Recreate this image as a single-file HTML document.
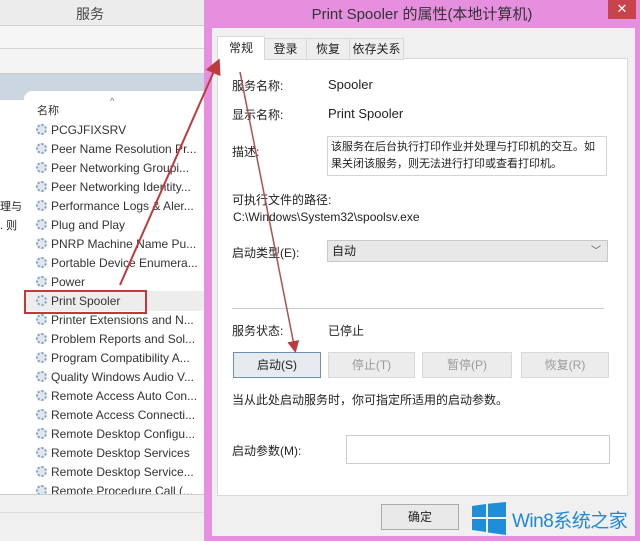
<!DOCTYPE html>
<html><head><meta charset="utf-8"><style>
html,body{margin:0;width:640px;height:541px;overflow:hidden}
body{position:relative;background:#f0f0f0;font-family:"Liberation Sans","Noto Sans CJK SC",sans-serif;font-size:12px;color:#222}
.a{position:absolute;white-space:nowrap}
.row{position:absolute;left:36px;height:19px;line-height:19px;font-size:12px;color:#333;white-space:nowrap}
.row i{display:inline-block;width:11px;height:11px;border-radius:50%;border:2px dotted #8aa0b4;box-sizing:border-box;margin-right:4px;vertical-align:-1px;background:#dfe8f0}
.btn{position:absolute;height:24px;line-height:24px;text-align:center;border:1px solid #d8d8d8;background:#ececec;color:#9a9a9a;font-size:12px}
</style></head><body>
<div class="a" style="left:0;top:0;width:205px;height:25px;background:#ececec;border-bottom:1px solid #d0d0d0"></div>
<div class="a" style="left:76px;top:4px;font-size:14px;color:#444">服务</div>
<div class="a" style="left:0;top:26px;width:205px;height:22px;background:#f6f6f6;border-bottom:1px solid #d4d4d4"></div>
<div class="a" style="left:0;top:49px;width:205px;height:24px;background:#f4f4f4;border-bottom:1px solid #ccc"></div>
<div class="a" style="left:0;top:74px;width:205px;height:26px;background:#ccd6e0"></div>
<div class="a" style="left:0;top:100px;width:205px;height:395px;background:#fff"></div>
<div class="a" style="left:24px;top:91px;width:181px;height:404px;background:#fff;border-radius:8px 0 0 0"></div>
<div class="a" style="left:0;top:198px;font-size:11px">理与</div>
<div class="a" style="left:0;top:217px;font-size:11px">. 则</div>
<div class="a" style="left:37px;top:102px;font-size:11px;color:#333">名称</div>
<div class="a" style="left:110px;top:96px;font-size:9px;color:#777">^</div>
<div class="row" style="top:121px"><i></i>PCGJFIXSRV</div>
<div class="row" style="top:140px"><i></i>Peer Name Resolution Pr...</div>
<div class="row" style="top:159px"><i></i>Peer Networking Groupi...</div>
<div class="row" style="top:178px"><i></i>Peer Networking Identity...</div>
<div class="row" style="top:197px"><i></i>Performance Logs &amp; Aler...</div>
<div class="row" style="top:216px"><i></i>Plug and Play</div>
<div class="row" style="top:235px"><i></i>PNRP Machine Name Pu...</div>
<div class="row" style="top:254px"><i></i>Portable Device Enumera...</div>
<div class="row" style="top:273px"><i></i>Power</div>
<div class="a" style="left:24px;top:291px;width:181px;height:20px;background:#ededed"></div>
<div class="row" style="top:292px"><i></i>Print Spooler</div>
<div class="a" style="left:24px;top:290px;width:119px;height:20px;border:2px solid #c0393b"></div>
<div class="row" style="top:311px"><i></i>Printer Extensions and N...</div>
<div class="row" style="top:330px"><i></i>Problem Reports and Sol...</div>
<div class="row" style="top:349px"><i></i>Program Compatibility A...</div>
<div class="row" style="top:368px"><i></i>Quality Windows Audio V...</div>
<div class="row" style="top:387px"><i></i>Remote Access Auto Con...</div>
<div class="row" style="top:406px"><i></i>Remote Access Connecti...</div>
<div class="row" style="top:425px"><i></i>Remote Desktop Configu...</div>
<div class="row" style="top:444px"><i></i>Remote Desktop Services</div>
<div class="row" style="top:463px"><i></i>Remote Desktop Service...</div>
<div class="row" style="top:482px;height:12px;overflow:hidden"><i></i>Remote Procedure Call (...</div>
<div class="a" style="left:0;top:494px;width:205px;height:47px;background:#f0f0f0;border-top:1px solid #ccc"></div>
<div class="a" style="left:0;top:512px;width:205px;height:1px;background:#ddd"></div>
<div class="a" style="left:204px;top:0;width:436px;height:541px;background:#e68fdf"></div>
<div class="a" style="left:204px;top:3px;width:436px;text-align:center;font-size:15px;color:#333">Print Spooler 的属性(本地计算机)</div>
<div class="a" style="left:608px;top:0;width:28px;height:19px;background:#c9434a;color:#fff;text-align:center;line-height:18px;font-size:13px">✕</div>
<div class="a" style="left:212px;top:28px;width:423px;height:508px;background:#f0f0f0"></div>
<div class="a" style="left:217px;top:58px;width:409px;height:436px;background:#fff;border:1px solid #d9d9d9"></div>
<div class="a" style="left:217px;top:36px;width:46px;height:23px;background:#fff;border:1px solid #d9d9d9;border-bottom:none;line-height:22px;text-align:center">常规</div>
<div class="a" style="left:264px;top:38px;width:41px;height:20px;background:#eee;border:1px solid #d9d9d9;line-height:20px;text-align:center">登录</div>
<div class="a" style="left:306px;top:38px;width:42px;height:20px;background:#eee;border:1px solid #d9d9d9;line-height:20px;text-align:center">恢复</div>
<div class="a" style="left:349px;top:38px;width:53px;height:20px;background:#eee;border:1px solid #d9d9d9;line-height:20px;text-align:center">依存关系</div>
<div class="a" style="left:232px;top:77px">服务名称:</div>
<div class="a" style="left:328px;top:77px;font-size:13px">Spooler</div>
<div class="a" style="left:232px;top:106px">显示名称:</div>
<div class="a" style="left:328px;top:106px;font-size:13px">Print Spooler</div>
<div class="a" style="left:232px;top:143px">描述:</div>
<div class="a" style="left:327px;top:136px;width:280px;height:40px;border:1px solid #d4d4d4;padding:2px 3px;box-sizing:border-box;line-height:17px;font-size:11px;white-space:normal">该服务在后台执行打印作业并处理与打印机的交互。如<br>果关闭该服务，则无法进行打印或查看打印机。</div>
<div class="a" style="left:232px;top:191px">可执行文件的路径:</div>
<div class="a" style="left:233px;top:210px;font-size:12px">C:\Windows\System32\spoolsv.exe</div>
<div class="a" style="left:232px;top:244px">启动类型(E):</div>
<div class="a" style="left:327px;top:240px;width:281px;height:22px;border:1px solid #c8c8c8;background:#e8e8e8;line-height:21px;padding-left:4px;box-sizing:border-box">自动<span style="position:absolute;right:6px;color:#555;font-size:10px">﹀</span></div>
<div class="a" style="left:232px;top:308px;width:372px;height:1px;background:#ccc"></div>
<div class="a" style="left:232px;top:322px">服务状态:</div>
<div class="a" style="left:328px;top:322px">已停止</div>
<div class="btn" style="left:233px;top:352px;width:86px;border-color:#6d8fb0;background:#e6ebef;color:#222">启动(S)</div>
<div class="btn" style="left:328px;top:352px;width:85px">停止(T)</div>
<div class="btn" style="left:422px;top:352px;width:88px">暂停(P)</div>
<div class="btn" style="left:521px;top:352px;width:86px">恢复(R)</div>
<div class="a" style="left:232px;top:391px">当从此处启动服务时，你可指定所适用的启动参数。</div>
<div class="a" style="left:232px;top:442px">启动参数(M):</div>
<div class="a" style="left:346px;top:435px;width:262px;height:27px;border:1px solid #ccc;background:#fff"></div>
<div class="btn" style="left:381px;top:504px;width:76px;height:24px;border-color:#aaa;background:#e9e9e9;color:#222">确定</div>
<svg class="a" style="left:472px;top:502px" width="34" height="33" viewBox="0 0 34 33"><path fill="#1e8ed8" d="M0 4L14 2V15H0ZM16 1.7L34 0V15H16ZM0 17H14V30L0 28ZM16 17H34V33L16 30.5Z"/></svg>
<div class="a" style="left:512px;top:506px;font-size:19px;color:#1e88d6;letter-spacing:-0.5px">Win8系统之家</div>
<svg class="a" style="left:0;top:0" width="640" height="541">
<defs><marker id="m" markerWidth="8" markerHeight="8" refX="6" refY="4" orient="auto"><path d="M0 0L8 4L0 8Z" fill="#c0393b"/></marker></defs>
<line x1="120" y1="285" x2="218" y2="62" stroke="#c0393b" stroke-width="2" marker-end="url(#m)"/>
<line x1="240" y1="72" x2="295" y2="350" stroke="#b05050" stroke-width="1.5" marker-end="url(#m)"/>
</svg>
</body></html>
